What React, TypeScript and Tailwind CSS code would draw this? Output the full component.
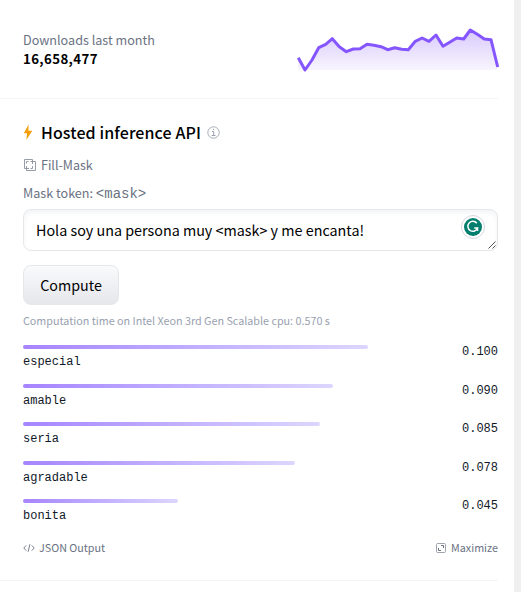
const sans = "font-['Noto_Sans_CJK_SC',sans-serif]";
const mono = "font-['Liberation_Mono',monospace]";

const line =
  '1.3,33.7 8,46 15,36 21.7,23.7 28.7,20.3 35.3,14.7 42.3,22.7 49.3,27.7 56.3,25 63,24.7 70,20.3 77,21.3 84,22.7 90.7,25.7 97.7,23.7 104.7,25.3 111.3,25.8 118.3,17.3 125,14 132,17.3 139,11 146,22.3 152.7,18.3 159.7,14 166.7,15 173.3,6 180.3,10.3 187.3,15 194,15.7 200.7,43';

const results = [
  { label: 'especial', score: '0.100', width: 345, height: 39 },
  { label: 'amable', score: '0.090', width: 310, height: 38 },
  { label: 'seria', score: '0.085', width: 297, height: 39 },
  { label: 'agradable', score: '0.078', width: 272, height: 38 },
  { label: 'bonita', score: '0.045', width: 155, height: 38 },
];

function Sparkline() {
  return (
    <svg width="204" height="52" viewBox="0 0 204 52" className="-mr-[3px] block">
      <defs>
        <linearGradient id="area" x1="0" y1="0" x2="0" y2="1">
          <stop offset="0" stopColor="#8b5cf6" stopOpacity="0.33" />
          <stop offset="1" stopColor="#8b5cf6" stopOpacity="0.06" />
        </linearGradient>
      </defs>
      <polygon points={`1,46 ${line} 201,46`} fill="url(#area)" />
      <polyline points={line} fill="none" stroke="#8556ff" strokeWidth="3" strokeLinejoin="round" />
    </svg>
  );
}

export default function App() {
  return (
    <div className={`flex h-[592px] w-[521px] overflow-hidden bg-white whitespace-nowrap text-black ${sans}`}>
      <main className="flex w-[514px] flex-col pr-4">
        <header className="flex h-[99px] shrink-0 items-start justify-between border-b border-gray-100 pt-6 pl-[23px]">
          <div className="pt-[6px]">
            <div className="h-[19px] text-[12.6px] leading-[19px] text-gray-500">Downloads last month</div>
            <div className="h-[19px] text-[13.2px] leading-[19px] font-bold tracking-[0.4px]">16,658,477</div>
          </div>
          <Sparkline />
        </header>

        <section className="flex h-[482px] shrink-0 flex-col border-b border-gray-100 pl-[23px]">
          <div className="mt-[21px] flex h-6 items-center">
            <svg width="10" height="16" viewBox="0 0 10 16" className="block">
              <path d="M5.6 0.5 0.8 9.2h3.3L3.3 16 9.3 6.8H5.4z" fill="#f59e0b" />
            </svg>
            <h2 className="ml-2 text-[16px] leading-6 font-medium tracking-[0.1px]">Hosted inference API</h2>
            <svg width="13" height="13" viewBox="0 0 13 13" className="ml-[6px]" fill="none" stroke="#9ca3af">
              <circle cx="6.5" cy="6.5" r="5.7" strokeWidth=".9" />
              <path d="M5 5.5h1.7v4M4.7 9.5h3.8" />
              <path d="M6 3.4h1.1" strokeWidth="1.1" />
            </svg>
          </div>
          <div className="mt-[11px] flex h-5 items-center text-[12.5px] leading-5 text-gray-500">
            <svg width="13" height="12" viewBox="0 0 13 12" className="mr-[5px]" fill="none" stroke="#8a919e">
              <path d="M3.5 9.5h-2v-9h8v2M5.5 2.5h-2v2M3.5 7v4.5h9v-9h-5M9.5 2.5V5M9.5 7v2.5h-2M6 9.5H3.5" strokeWidth=".9" />
            </svg>
            Fill-Mask
          </div>
          <div className="mt-2 h-5 text-[12.6px] leading-5 text-gray-500">
            Mask token: <span className={`text-sm ${mono}`}>&lt;mask&gt;</span>
          </div>
          <div className="relative mt-[6px] flex h-[42px] shrink-0 items-center rounded-lg border border-gray-200 px-3 text-[14.33px] leading-6 shadow-[inset_0_3px_5px_#f3f4f6]">
            Hola soy una persona muy &lt;mask&gt; y me encanta!
            <span className="absolute top-[5px] right-3 flex size-6 items-center justify-center rounded-full border border-[#d5d6e1] bg-white">
              <svg width="18" height="18" viewBox="0 0 18 18">
                <circle cx="9" cy="9" r="9" fill="#027e6f" />
                <path d="M12.8 5.2A5 5 0 1 0 13.6 10H10.2M13.5 9.5V13" fill="none" stroke="#fff" strokeWidth="1.5" />
              </svg>
            </span>
            <svg width="8" height="8" viewBox="0 0 8 8" className="absolute right-px bottom-px" stroke="#555" strokeWidth="1">
              <path d="M0.5 7.5 7.5 .5M4.5 7.5 7.5 4.5" />
            </svg>
          </div>
          <button className="mt-[14px] flex h-10 w-24 shrink-0 items-center justify-center rounded-lg border border-gray-200 bg-linear-to-b from-gray-50 to-gray-200 text-[14.3px]">
            Compute
          </button>
          <div className="mt-[6px] h-5 text-[10.75px] leading-5 text-gray-400">
            Computation time on Intel Xeon 3rd Gen Scalable cpu: 0.570 s
          </div>
          <div className={`mt-[14px] text-xs leading-4 text-gray-900 ${mono}`}>
            {results.map((r) => (
              <div key={r.label} className="flex items-start justify-between" style={{ height: r.height }}>
                <div>
                  <div
                    className="h-1 rounded-full bg-linear-to-r from-violet-400 to-violet-200"
                    style={{ width: r.width }}
                  />
                  <div className="mt-[5px]">{r.label}</div>
                </div>
                <span className="-mt-[1px]">{r.score}</span>
              </div>
            ))}
          </div>
          <footer className="mt-[1px] flex h-5 items-center justify-between text-[10.75px] text-gray-500">
            <div className="flex items-center">
              <svg width="12" height="8" viewBox="0 0 12 8" className="mr-[4px]" fill="none" stroke="#6b7280" strokeWidth=".9">
                <path d="M3.3 1.3.8 4l2.5 2.7M8.7 1.3 11.2 4 8.7 6.7M6.9.2 5.1 7.8" />
              </svg>
              JSON Output
            </div>
            <div className="flex items-center">
              <svg width="10" height="10" viewBox="0 0 10 10" className="mr-[5px]" fill="none" stroke="#6b7280">
                <rect x=".5" y=".5" width="9" height="9" rx="1" stroke="#9ca3af" />
                <path d="M5 2.5h2.5V5M5 7.5H2.5V5" />
              </svg>
              Maximize
            </div>
          </footer>
        </section>
      </main>
      <div className="w-[7px] bg-[#f0f0f0]" />
    </div>
  );
}
